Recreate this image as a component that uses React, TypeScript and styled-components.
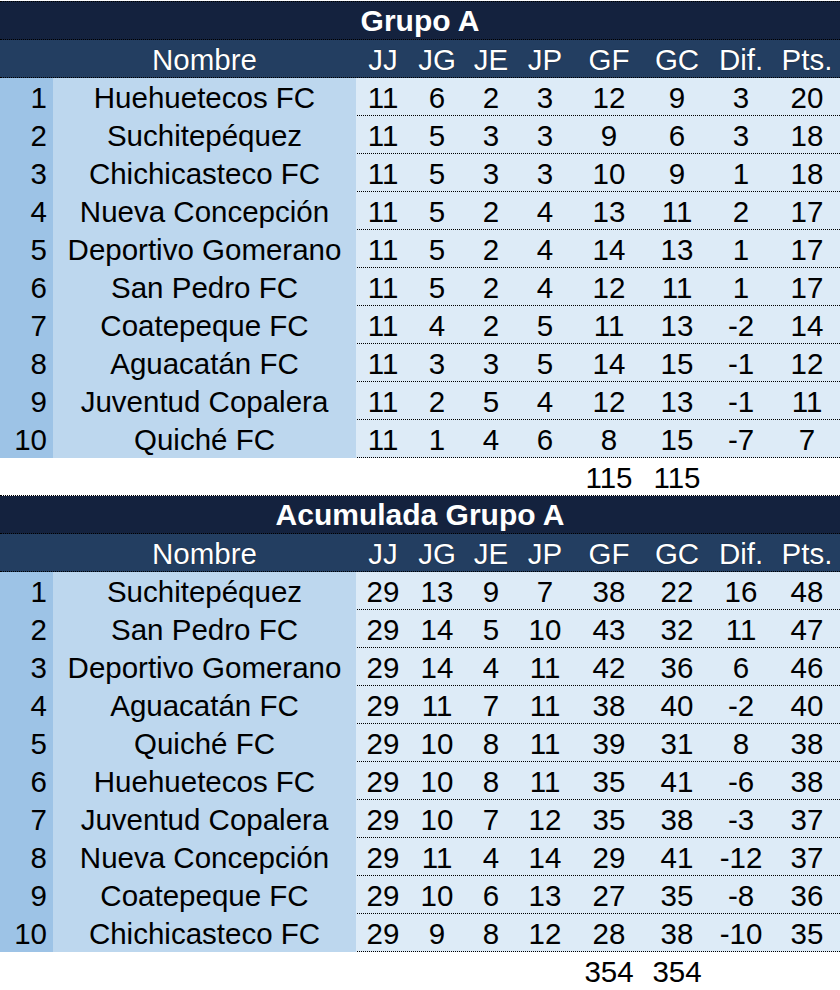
import React from "react";
import styled, { createGlobalStyle } from "styled-components";

const GlobalStyle = createGlobalStyle`
  html, body { margin: 0; padding: 0; background: #ffffff; }
  body { font-family: "Liberation Sans", Arial, sans-serif; }
`;

const COLS = "53px 303px 54px 54px 54px 54px 74px 62px 66px 66px";

const Page = styled.div`
  width: 840px;
  padding-top: 1px;
  display: flex;
  flex-direction: column;
`;

const Block = styled.section`
  display: flex;
  flex-direction: column;
`;

const TitleRow = styled.div<{ $first?: boolean }>`
  background: #14223e;
  color: #ffffff;
  font-weight: bold;
  font-size: 30px;
  line-height: 36px;
  display: flex;
  align-items: center;
  justify-content: center;
  padding-top: 1px;
  box-sizing: border-box;
  border-top: ${(p) => (p.$first ? "1px dotted #000" : "none")};
  border-bottom: 1px dotted #000;
  height: ${(p) => (p.$first ? "39px" : "38px")};
`;

const Row = styled.div<{ $kind: "head" | "data" | "total"; $last?: boolean }>`
  display: grid;
  grid-template-columns: ${COLS};
  height: 38px;
  box-sizing: border-box;
  border-bottom: ${(p) => (p.$last ? "none" : "1px dotted #000")};
  font-size: 29.5px;
  line-height: 36px;
  color: ${(p) => (p.$kind === "head" ? "#ffffff" : "#000000")};
  background: ${(p) =>
    p.$kind === "head" ? "#233e61" : p.$kind === "data" ? "#ddebf7" : "#ffffff"};
`;

const Cell = styled.div<{ $align?: "left" | "center" | "right"; $bg?: string }>`
  text-align: ${(p) => p.$align || "center"};
  background: ${(p) => p.$bg || "transparent"};
  padding-top: 2px;
  padding-right: ${(p) => (p.$align === "right" ? "6px" : "0")};
  white-space: nowrap;
  overflow: visible;
`;

const HeadCell = styled(Cell)`
  text-shadow: 0 0 1px #0a1526;
`;

type Team = [string, number, number, number, number, number, number, number, number];

const grupoA: Team[] = [
  ["Huehuetecos FC", 11, 6, 2, 3, 12, 9, 3, 20],
  ["Suchitepéquez", 11, 5, 3, 3, 9, 6, 3, 18],
  ["Chichicasteco FC", 11, 5, 3, 3, 10, 9, 1, 18],
  ["Nueva Concepción", 11, 5, 2, 4, 13, 11, 2, 17],
  ["Deportivo Gomerano", 11, 5, 2, 4, 14, 13, 1, 17],
  ["San Pedro FC", 11, 5, 2, 4, 12, 11, 1, 17],
  ["Coatepeque FC", 11, 4, 2, 5, 11, 13, -2, 14],
  ["Aguacatán FC", 11, 3, 3, 5, 14, 15, -1, 12],
  ["Juventud Copalera", 11, 2, 5, 4, 12, 13, -1, 11],
  ["Quiché FC", 11, 1, 4, 6, 8, 15, -7, 7],
];

const acumulada: Team[] = [
  ["Suchitepéquez", 29, 13, 9, 7, 38, 22, 16, 48],
  ["San Pedro FC", 29, 14, 5, 10, 43, 32, 11, 47],
  ["Deportivo Gomerano", 29, 14, 4, 11, 42, 36, 6, 46],
  ["Aguacatán FC", 29, 11, 7, 11, 38, 40, -2, 40],
  ["Quiché FC", 29, 10, 8, 11, 39, 31, 8, 38],
  ["Huehuetecos FC", 29, 10, 8, 11, 35, 41, -6, 38],
  ["Juventud Copalera", 29, 10, 7, 12, 35, 38, -3, 37],
  ["Nueva Concepción", 29, 11, 4, 14, 29, 41, -12, 37],
  ["Coatepeque FC", 29, 10, 6, 13, 27, 35, -8, 36],
  ["Chichicasteco FC", 29, 9, 8, 12, 28, 38, -10, 35],
];

const headers = ["JJ", "JG", "JE", "JP", "GF", "GC", "Dif.", "Pts."];

function Standings({
  title,
  teams,
  total,
  first,
  last,
}: {
  title: string;
  teams: Team[];
  total: number;
  first?: boolean;
  last?: boolean;
}) {
  return (
    <Block>
      <TitleRow $first={first}>{title}</TitleRow>
      <Row $kind="head">
        <HeadCell />
        <HeadCell>Nombre</HeadCell>
        {headers.map((h) => (
          <HeadCell key={h}>{h}</HeadCell>
        ))}
      </Row>
      {teams.map((t, i) => (
        <Row $kind="data" key={t[0]}>
          <Cell $align="right" $bg="#9dc3e6">{i + 1}</Cell>
          <Cell $bg="#bdd7ee">{t[0]}</Cell>
          {t.slice(1).map((v, j) => (
            <Cell key={j}>{v}</Cell>
          ))}
        </Row>
      ))}
      <Row $kind="total" $last={last}>
        <Cell />
        <Cell />
        <Cell />
        <Cell />
        <Cell />
        <Cell />
        <Cell>{total}</Cell>
        <Cell>{total}</Cell>
        <Cell />
        <Cell />
      </Row>
    </Block>
  );
}

export default function App() {
  return (
    <>
      <GlobalStyle />
      <Page>
        <Standings title="Grupo A" teams={grupoA} total={115} first />
        <Standings title="Acumulada Grupo A" teams={acumulada} total={354} last />
      </Page>
    </>
  );
}
